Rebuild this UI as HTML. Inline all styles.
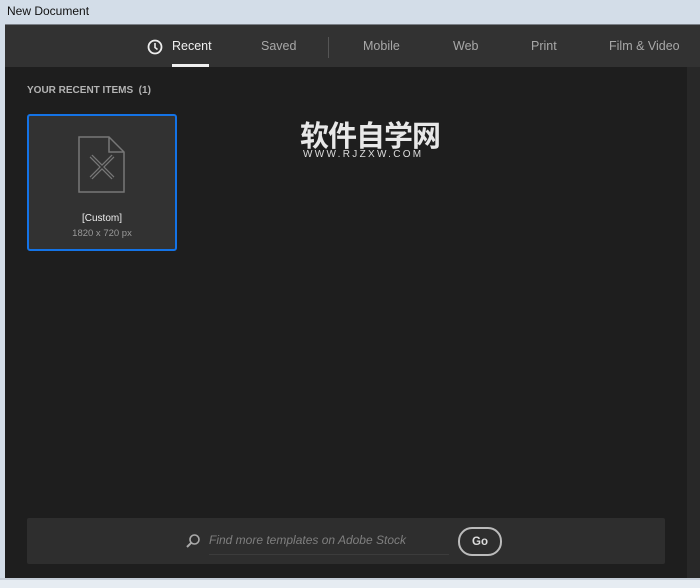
<!DOCTYPE html>
<html><head><style>
body{margin:0;width:700px;height:586px;overflow:hidden;background:#d3dde8;font-family:"Liberation Sans",sans-serif;position:relative}
.t{position:absolute;left:7px;top:4px;font-size:12px;color:#111}
.win{position:absolute;left:5px;top:24px;width:695px;height:554px;background:#1e1e1e;border-top:1px solid #7a7f86}
.hdr{position:absolute;left:0;top:0;width:695px;height:42px;background:#323232}
.tab{position:absolute;top:14px;font-size:12.5px;color:#a8a8a8}
.rs{position:absolute;left:682px;top:42px;width:13px;height:512px;background:#282828}
.bot{position:absolute;left:0;top:578px;width:700px;height:8px;background:#e6ecf2;border-top:2px solid #c6ced8}
</style></head><body>
<div class="t">New Document</div>
<div class="win">
 <div class="hdr">
  <svg style="position:absolute;left:142px;top:14px" width="16" height="16" viewBox="0 0 16 16"><circle cx="8" cy="8" r="6.5" fill="none" stroke="#eee" stroke-width="1.8"/><path d="M8 4v4.5l2.5 2" fill="none" stroke="#eee" stroke-width="1.6"/></svg>
  <div class="tab" style="left:167px;color:#f0f0f0">Recent</div>
  <div style="position:absolute;left:167px;top:39px;width:37px;height:3px;background:#f0f0f0"></div>
  <div class="tab" style="left:256px">Saved</div>
  <div style="position:absolute;left:323px;top:12px;width:1px;height:21px;background:#555"></div>
  <div class="tab" style="left:358px">Mobile</div>
  <div class="tab" style="left:448px">Web</div>
  <div class="tab" style="left:526px">Print</div>
  <div class="tab" style="left:604px">Film &amp; Video</div>
 </div>
 <div class="rs"></div>
 <div style="position:absolute;left:22px;top:60px;font-size:10px;font-weight:bold;color:#b4b4b4">YOUR RECENT ITEMS &nbsp;(1)</div>
 <div style="position:absolute;left:22px;top:89px;width:146px;height:133px;background:#323232;border:2px solid #1473e6;border-radius:3px">
  <svg style="position:absolute;left:49px;top:20px" width="48" height="58" viewBox="0 0 48 58"><path d="M1 1h30l15 15v40H1z M31 1v15h15" fill="none" stroke="#777" stroke-width="1.5"/><path d="M13 20l22 22M35 20l-22 22" stroke="#777" stroke-width="4"/><path d="M13 20l22 22M35 20l-22 22" stroke="#323232" stroke-width="1.5"/></svg>
  <div style="position:absolute;top:97px;width:100%;text-align:center;font-size:10px;color:#eee">[Custom]</div>
  <div style="position:absolute;top:112px;width:100%;text-align:center;font-size:9.5px;color:#999">1820 x 720 px</div>
 </div>
 <div style="position:absolute;left:295px;top:93px;font-family:'Noto Sans CJK SC',sans-serif;font-size:29px;font-weight:bold;color:#e8e8e8;letter-spacing:-1px;line-height:32px">软件自学网</div>
 <div style="position:absolute;left:298px;top:124px;font-size:10px;color:#ddd;letter-spacing:2.3px">WWW.RJZXW.COM</div>
 <div style="position:absolute;left:22px;top:493px;width:638px;height:46px;background:#2e2e2e;border-radius:2px">
  <svg style="position:absolute;left:158px;top:15px" width="16" height="16" viewBox="0 0 16 16"><circle cx="9.5" cy="6.5" r="4.5" fill="none" stroke="#aaa" stroke-width="1.6"/><path d="M6.2 9.8L2 14" stroke="#aaa" stroke-width="2"/></svg>
  <div style="position:absolute;left:182px;top:15px;font-size:12px;font-style:italic;color:#7f7f7f">Find more templates on Adobe Stock</div>
  <div style="position:absolute;left:182px;top:36px;width:240px;height:1px;background:#3c3c3c"></div>
  <div style="position:absolute;left:431px;top:9px;width:40px;height:25px;border:2px solid #bbb;border-radius:14px;color:#ddd;font-size:11.5px;font-weight:bold;text-align:center;line-height:27px">Go</div>
 </div>
</div>
<div class="bot"></div>
</body></html>
